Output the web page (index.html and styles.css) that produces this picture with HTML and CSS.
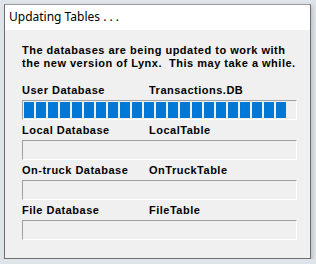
FILE: index.html
```html
<!DOCTYPE html>
<html lang="en">
<head>
    <meta charset="UTF-8">
    <title>Updating Tables</title>
    <link rel="stylesheet" href="styles.css">
</head>
<body>
    <div class="window">
        <div class="titlebar">Updating Tables . . .</div>
        <div class="content">
            <p class="message">The databases are being updated to work with<br>the new version of Lynx.&nbsp; This may take a while.</p>

            <div class="row">
                <div class="labels"><span class="db">User Database</span><span>Transactions.DB</span></div>
                <div class="bar">
                    <div class="fill" style="width: 264px;"></div>
                </div>
            </div>

            <div class="row">
                <div class="labels"><span class="db">Local Database</span><span>LocalTable</span></div>
                <div class="bar"></div>
            </div>

            <div class="row">
                <div class="labels"><span class="db">On-truck Database</span><span>OnTruckTable</span></div>
                <div class="bar"></div>
            </div>

            <div class="row">
                <div class="labels"><span class="db">File Database</span><span>FileTable</span></div>
                <div class="bar"></div>
            </div>
        </div>
    </div>
</body>
</html>
```

FILE: styles.css
```css
/* Dialog */
body {
    margin: 0;
    padding: 4px 0 0 4px;
    background: #dfe4ea;
    font-family: 'Liberation Sans', Arial, sans-serif;
}

.window {
    width: 307px;
    height: 255px;
    box-sizing: border-box;
    border: 1px solid #6e6e6e;
    border-top-color: #9a9a9a;
    background: #f0f0f0;
    box-shadow: 2px 2px 4px rgba(0, 0, 0, 0.15);
}

.titlebar {
    height: 25px;
    background: #fff;
    color: #000;
    font-family: 'Noto Sans', sans-serif;
    font-size: 12px;
    line-height: 23px;
    padding-left: 4px;
}

.content {
    padding: 14px 0 0 17px;
}

.message {
    margin: 0 0 14px;
    font-size: 11px;
    font-weight: bold;
    letter-spacing: 0.5px;
    line-height: 13px;
    color: #000;
}

.row {
    margin-bottom: 4px;
}

.labels {
    display: flex;
    margin-bottom: 3px;
    font-size: 11px;
    font-weight: bold;
    letter-spacing: 0.5px;
    line-height: 13px;
    color: #000;
}

.labels .db {
    width: 127px;
}

.bar {
    width: 275px;
    height: 20px;
    box-sizing: border-box;
    border: 1px solid #fff;
    border-top-color: #a0a0a0;
    border-left-color: #a0a0a0;
    padding: 1px;
}

.fill {
    height: 16px;
    background: repeating-linear-gradient(to right, #0078d7 0, #0078d7 10px, transparent 10px, transparent 12px);
}
```
